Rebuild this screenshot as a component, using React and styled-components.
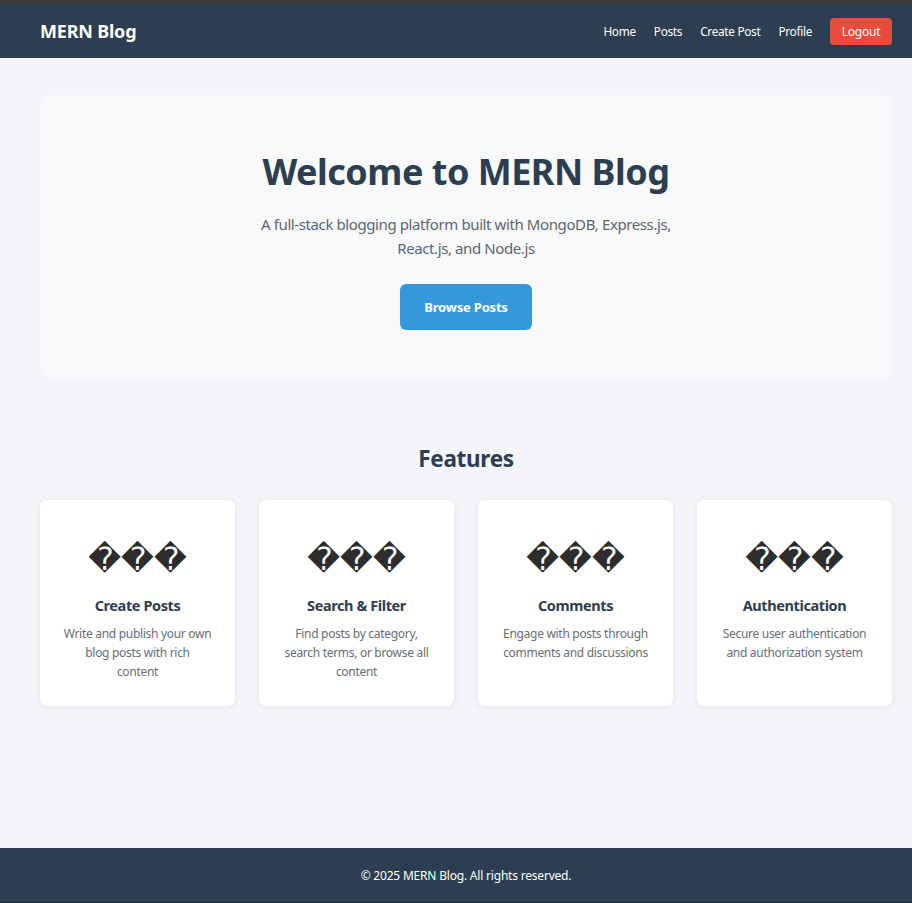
import React from "react";
import styled, { createGlobalStyle } from "styled-components";

const Global = createGlobalStyle`
  * { box-sizing: border-box; }
  html, body { margin: 0; padding: 0; }
  body {
    font-family: "Noto Sans", "Open Sans", sans-serif;
    background: #f4f5f8;
    color: #2c3e50;
    border-top: 4px solid #3b3b3b;
    border-bottom: 1px solid #1b2733;
  }
`;

const Page = styled.div`
  min-height: calc(100vh - 5px);
  display: flex;
  flex-direction: column;
`;

const Navbar = styled.nav`
  background: #2c3e50;
  height: 54px;
  display: flex;
  align-items: center;
  justify-content: space-between;
  padding: 0 20px 0 40px;
`;

const Brand = styled.a`
  color: #fff;
  font-size: 18px;
  letter-spacing: -0.2px;
  font-weight: 700;
  text-decoration: none;
`;

const NavLinks = styled.div`
  display: flex;
  align-items: center;
  gap: 18px;
`;

const NavLink = styled.a`
  color: #fff;
  font-size: 11.8px;
  letter-spacing: -0.3px;
  text-decoration: none;
`;

const LogoutButton = styled.button`
  background: #e74c3c;
  color: #fff;
  border: none;
  border-radius: 4px;
  height: 27px;
  width: 62px;
  padding: 0;
  font-family: inherit;
  font-size: 12px;
  letter-spacing: -0.2px;
  cursor: pointer;
`;

const Main = styled.main`
  flex: 1;
  padding: 37px 20px 40px 40px;
`;

const Hero = styled.section`
  background: #f8f9fb;
  border-radius: 10px;
  height: 283px;
  display: flex;
  flex-direction: column;
  align-items: center;
  text-align: center;
  padding-top: 53px;
`;

const HeroTitle = styled.h1`
  margin: 0;
  font-size: 36px;
  letter-spacing: -0.5px;
  line-height: 48px;
  font-weight: 700;
  color: #2c3e50;
`;

const HeroText = styled.p`
  margin: 16px 0 0;
  max-width: 420px;
  font-size: 15px;
  letter-spacing: -0.4px;
  line-height: 24px;
  color: #5d6670;
`;

const PrimaryButton = styled.button`
  margin-top: 24px;
  width: 132px;
  height: 46px;
  background: #3498db;
  color: #fff;
  border: none;
  border-radius: 6px;
  font-family: inherit;
  font-size: 13px;
  letter-spacing: -0.2px;
  font-weight: 700;
  cursor: pointer;
`;

const Features = styled.section`
  margin-top: 66px;
`;

const SectionTitle = styled.h2`
  margin: 0;
  text-align: center;
  font-size: 22.5px;
  letter-spacing: -0.3px;
  line-height: 30px;
  font-weight: 700;
  color: #2c3e50;
`;

const Grid = styled.div`
  margin-top: 26px;
  display: grid;
  grid-template-columns: repeat(4, 1fr);
  gap: 24px;
`;

const Card = styled.div`
  background: #fff;
  border-radius: 7px;
  box-shadow: 0 1px 6px rgba(0, 0, 0, 0.08);
  height: 206px;
  padding: 39px 23.5px 0;
  text-align: center;
`;

const Icon = styled.div`
  font-family: "DejaVu Sans", sans-serif;
  font-size: 32px;
  line-height: 40px;
  color: #2d2d2d;
`;

const CardTitle = styled.h3`
  margin: 15px 0 0;
  font-size: 14.5px;
  letter-spacing: -0.4px;
  line-height: 22px;
  font-weight: 700;
  color: #2c3e50;
`;

const CardText = styled.p`
  margin: 8px 0 0;
  font-size: 12px;
  letter-spacing: -0.3px;
  line-height: 19px;
  color: #666e76;
`;

const Footer = styled.footer`
  background: #2c3e50;
  color: #fff;
  height: 54px;
  display: flex;
  align-items: center;
  justify-content: center;
  padding: 0 20px 0 40px;
  font-size: 12px;
  letter-spacing: -0.2px;
`;

const features = [
  { title: "Create Posts", text: "Write and publish your own blog posts with rich content" },
  { title: "Search & Filter", text: "Find posts by category, search terms, or browse all content" },
  { title: "Comments", text: "Engage with posts through comments and discussions" },
  { title: "Authentication", text: "Secure user authentication and authorization system" },
];

export default function App() {
  return (
    <>
      <Global />
      <Page>
        <Navbar>
          <Brand href="#">MERN Blog</Brand>
          <NavLinks>
            <NavLink href="#">Home</NavLink>
            <NavLink href="#">Posts</NavLink>
            <NavLink href="#">Create Post</NavLink>
            <NavLink href="#">Profile</NavLink>
            <LogoutButton>Logout</LogoutButton>
          </NavLinks>
        </Navbar>
        <Main>
          <Hero>
            <HeroTitle>Welcome to MERN Blog</HeroTitle>
            <HeroText>
              A full-stack blogging platform built with MongoDB, Express.js, React.js, and Node.js
            </HeroText>
            <PrimaryButton>Browse Posts</PrimaryButton>
          </Hero>
          <Features>
            <SectionTitle>Features</SectionTitle>
            <Grid>
              {features.map((f) => (
                <Card key={f.title}>
                  <Icon>{"\uFFFD\uFFFD\uFFFD"}</Icon>
                  <CardTitle>{f.title}</CardTitle>
                  <CardText>{f.text}</CardText>
                </Card>
              ))}
            </Grid>
          </Features>
        </Main>
        <Footer>© 2025 MERN Blog. All rights reserved.</Footer>
      </Page>
    </>
  );
}
